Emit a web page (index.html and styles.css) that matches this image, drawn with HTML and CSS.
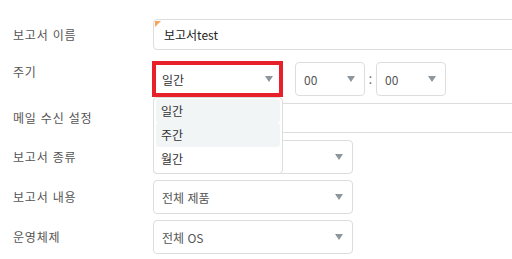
FILE: index.html
```html
<!DOCTYPE html>
<html lang="ko">
<head>
  <meta charset="UTF-8" />
  <title>보고서 설정</title>
  <link rel="stylesheet" href="styles.css">
</head>
<body>
  <div class="form">
    <div class="row row-name">
      <div class="label">보고서 이름</div>
      <div class="field input required">보고서test</div>
    </div>
    <div class="row row-cycle">
      <div class="label">주기</div>
      <div class="controls">
        <div class="select-wrap marked">
          <div class="select sel-cycle"><span class="value dark">일간</span><i class="caret"></i></div>
          <ul class="menu">
            <li class="on">일간</li>
            <li class="on">주간</li>
            <li>월간</li>
          </ul>
        </div>
        <div class="select sel-time"><span class="value">00</span><i class="caret"></i></div>
        <span class="colon">:</span>
        <div class="select sel-time"><span class="value">00</span><i class="caret"></i></div>
      </div>
    </div>
    <div class="row row-mail">
      <div class="label">메일 수신 설정</div>
      <div class="field input"></div>
    </div>
    <div class="row row-type">
      <div class="label">보고서 종류</div>
      <div class="select sel-wide"><span class="value"></span><i class="caret"></i></div>
    </div>
    <div class="row row-content">
      <div class="label">보고서 내용</div>
      <div class="select sel-wide"><span class="value">전체 제품</span><i class="caret"></i></div>
    </div>
    <div class="row row-os">
      <div class="label">운영체제</div>
      <div class="select sel-wide"><span class="value">전체 OS</span><i class="caret"></i></div>
    </div>
  </div>
</body>
</html>
```

FILE: styles.css
```css
*, *::before, *::after {
  box-sizing: border-box;
}
html, body {
  overflow: hidden;
}
body {
  margin: 0;
  font-family: "Noto Sans CJK KR", "Noto Sans", sans-serif;
  font-size: 12px;
  color: #555;
  background: #fff;
}
.form {
  padding: 19px 0 0 13px;
}
.row {
  display: flex;
  align-items: center;
}
.label {
  width: 140px;
  flex: none;
  line-height: 20px;
  letter-spacing: 0.8px;
  color: #555;
}
.row-cycle {
  margin-top: 12px;
  align-items: flex-start;
}
.row-mail {
  margin-top: 7px;
}
.row-type {
  margin-top: 7px;
}
.row-content, .row-os {
  margin-top: 6px;
}
.field {
  border: 1px solid #ddd;
  border-radius: 4px;
  background: #fff;
}
.input {
  width: 420px;
  flex: none;
  height: 31px;
  padding: 0 10px;
  line-height: 29px;
  color: #222;
  position: relative;
}
.row-mail .input {
  height: 30px;
}
.required::before {
  content: "";
  position: absolute;
  left: 1px;
  top: 1px;
  border-top: 6px solid #f5a65b;
  border-right: 6px solid transparent;
}
.controls {
  display: flex;
  align-items: center;
}
.select {
  display: flex;
  align-items: center;
  justify-content: space-between;
  height: 34px;
  padding: 0 9px 0 8px;
  border: 1px solid #ddd;
  border-radius: 4px;
  background: #fff;
}
.value {
  color: #555;
}
.value.dark {
  color: #333;
}
.caret {
  width: 0;
  height: 0;
  border-left: 4px solid transparent;
  border-right: 4px solid transparent;
  border-top: 6px solid #8d969d;
}
.sel-cycle {
  width: 130px;
}
.sel-time {
  width: 70px;
}
.select-wrap {
  position: relative;
  margin-right: 12px;
}
.marked::after {
  content: "";
  position: absolute;
  left: -1px;
  top: -1px;
  width: 131px;
  height: 36px;
  border: 4px solid #e8202a;
}
.colon {
  width: 11px;
  text-align: center;
  color: #666;
}
.menu {
  position: absolute;
  left: 0;
  top: 35px;
  width: 130px;
  margin: 0;
  padding: 1px 2px 2px;
  list-style: none;
  background: #fff;
  border: 1px solid #ddd;
  border-radius: 4px;
  z-index: 2;
}
.menu li {
  height: 24px;
  line-height: 24px;
  padding-left: 5px;
  color: #333;
  border-radius: 3px;
}
.menu li.on {
  background: #f2f5f6;
}
.sel-wide {
  width: 200px;
}
```
